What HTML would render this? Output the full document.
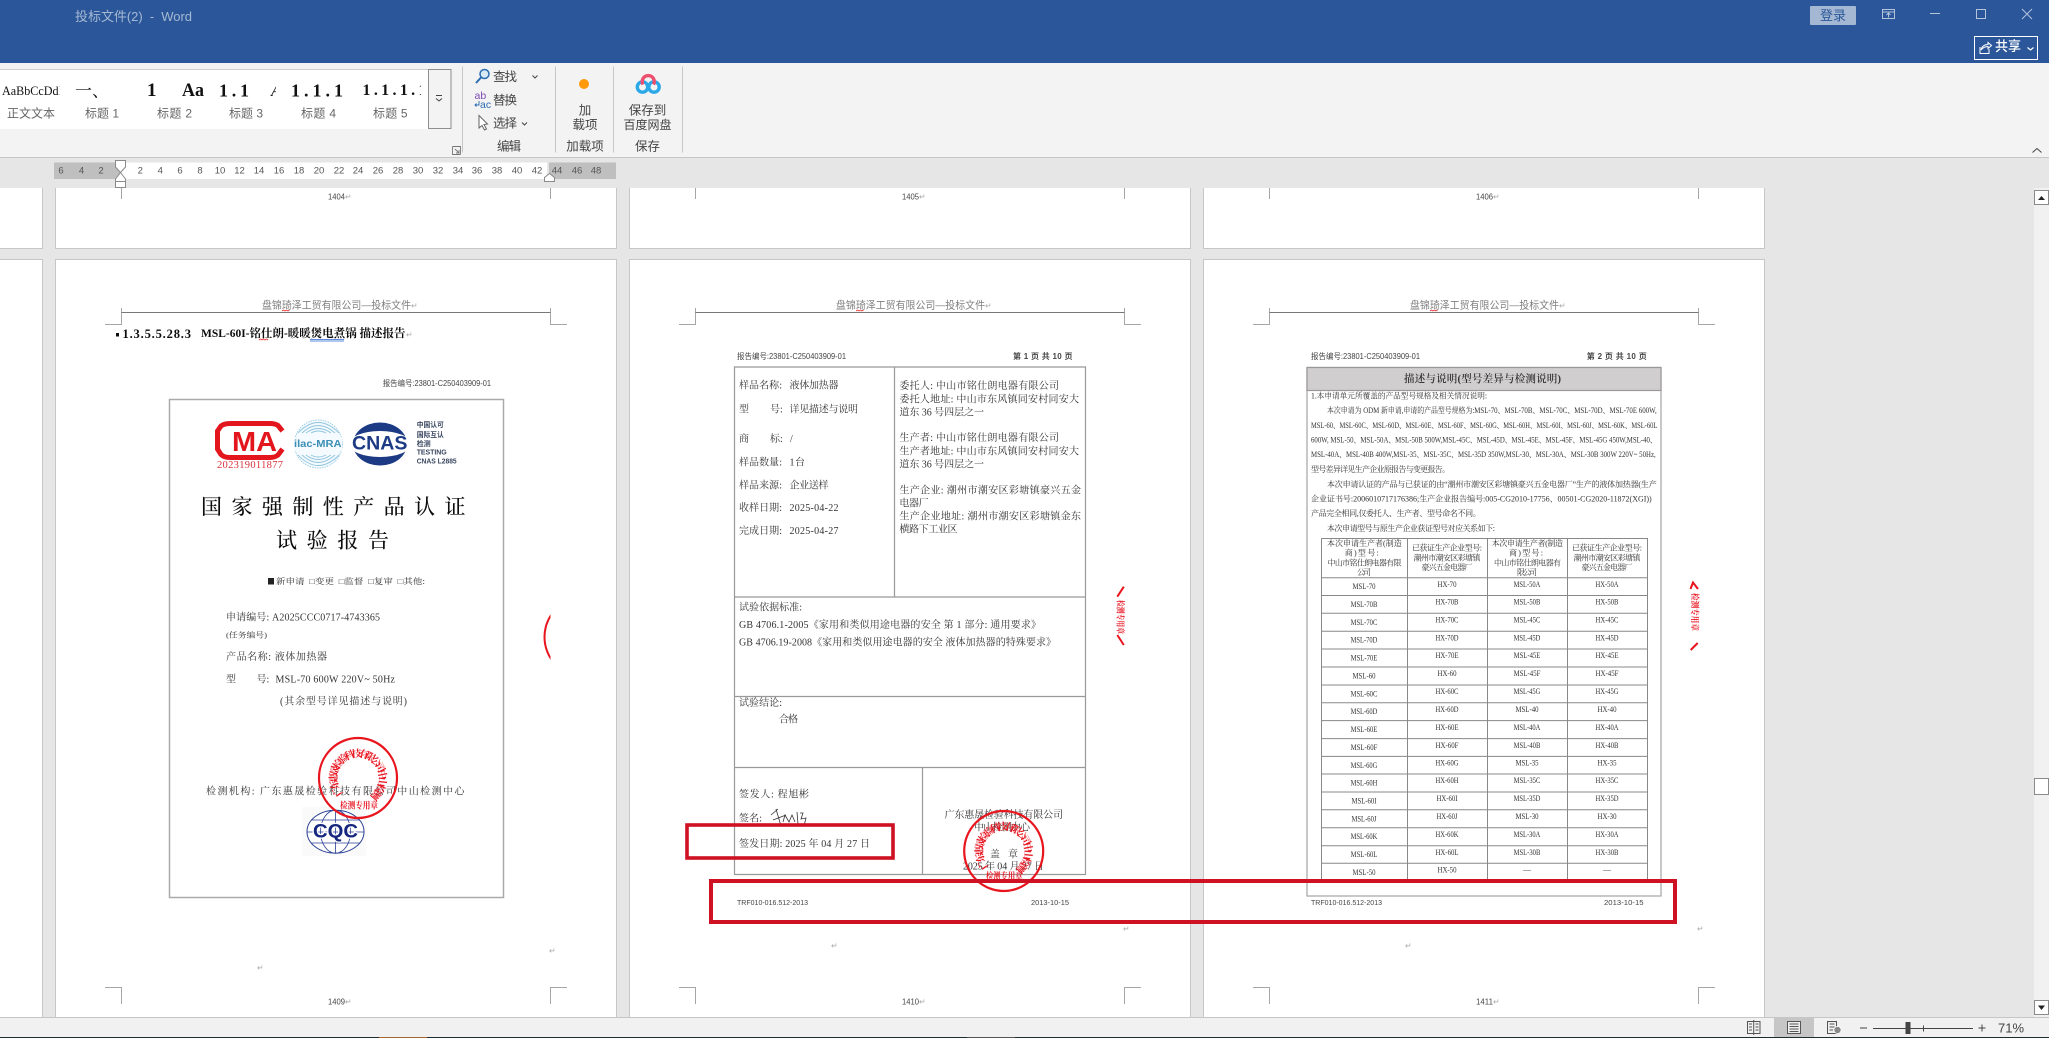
<!DOCTYPE html>
<html lang="zh"><head><meta charset="utf-8"><title>投标文件(2) - Word</title>
<style>
html,body{margin:0;padding:0;background:#e6e6e6;overflow:hidden}
svg{display:block;position:absolute;left:0;top:0}
text{dominant-baseline:central;white-space:pre}
.u{font-family:"Liberation Sans","Noto Sans CJK SC",sans-serif;font-size:12px;fill:#444}
.h{font-family:"Liberation Sans","Noto Sans CJK SC",sans-serif;font-size:10.5px;fill:#808080}
.s{font-family:"Liberation Serif","Noto Serif CJK SC",serif;font-size:10px;fill:#333}
.z{font-family:"Liberation Serif","Noto Serif CJK SC",serif;font-size:8px;fill:#333}
.n{font-family:"Liberation Sans","Noto Sans CJK SC",sans-serif;font-size:8px;fill:#444}
.p{font-family:"DejaVu Sans",sans-serif;font-size:8px;fill:#aaa}
.g{font-family:"Liberation Serif","Noto Serif CJK SC",serif;fill:#111}
.r{font-family:"Liberation Sans",sans-serif;font-size:9.5px;fill:#555;text-anchor:middle}
.m{text-anchor:middle}
.red{fill:#e8121f;font-family:"Liberation Serif","Noto Serif CJK SC",serif;font-weight:bold}
</style></head><body>
<svg width="2049" height="1038" viewBox="0 0 2049 1038" xmlns="http://www.w3.org/2000/svg">
<defs>
<filter id="b" filterUnits="userSpaceOnUse" x="0" y="188" width="2049" height="850"><feGaussianBlur stdDeviation="0.32"/></filter>
<clipPath id="c1"><rect x="530" y="600" width="20.5" height="80"/></clipPath>
<clipPath id="g1"><rect x="0" y="69" width="59.5" height="40"/></clipPath>
<clipPath id="g2"><rect x="262" y="69" width="14" height="40"/></clipPath>
<clipPath id="g3"><rect x="345" y="69" width="76" height="40"/></clipPath>
<path id="a1" d="M341 795A24 24 0 1 1 375 795"/>
<path id="a2" d="M986.7 868A24 24 0 1 1 1020.7 868"/>
</defs>

<!-- document background and pages -->
<rect width="2049" height="1038" fill="#e6e6e6"/>
<g fill="#fff" stroke="#c6c6c6">
<rect x="-5" y="180" width="47.5" height="68.5"/><rect x="55.5" y="180" width="561" height="68.5"/><rect x="629.5" y="180" width="561" height="68.5"/><rect x="1203.5" y="180" width="561" height="68.5"/>
<rect x="-5" y="259.5" width="47.5" height="790"/><rect x="55.5" y="259.5" width="561" height="790"/><rect x="629.5" y="259.5" width="561" height="790"/><rect x="1203.5" y="259.5" width="561" height="790"/>
</g>

<!-- guides upper row -->
<path d="M121.5 188V199M550.5 188V199M695.5 188V199M1124.5 188V199M1269.5 188V199M1698.5 188V199" stroke="#a6a6a6" fill="none"/>
<g filter="url(#b)">
<text class="n" x="328" y="197" textLength="17" lengthAdjust="spacingAndGlyphs">1404</text><text class="p" x="345" y="197">↵</text>
<text class="n" x="902" y="197" textLength="17" lengthAdjust="spacingAndGlyphs">1405</text><text class="p" x="919" y="197">↵</text>
<text class="n" x="1476" y="197" textLength="17" lengthAdjust="spacingAndGlyphs">1406</text><text class="p" x="1493" y="197">↵</text>

<!-- crops and header rules -->
<path d="M105 324.5H121.5V308M550.5 308V324.5H567M105 987.5H121.5V1004M567 987.5H550.5V1004M679 324.5H695.5V308M1124.5 308V324.5H1141M679 987.5H695.5V1004M1141 987.5H1124.5V1004M1253 324.5H1269.5V308M1698.5 308V324.5H1715M1253 987.5H1269.5V1004M1715 987.5H1698.5V1004" stroke="#a6a6a6" fill="none"/>
<path d="M121.5 312.5H550.5M695.5 312.5H1124.5M1269.5 312.5H1698.5" stroke="#777" fill="none"/>

<text class="h" x="262" y="305.5" textLength="149" lengthAdjust="spacingAndGlyphs">盘锦琦泽工贸有限公司—投标文件</text><text class="p" x="411" y="306">↵</text>
<text class="h" x="836" y="305.5" textLength="149" lengthAdjust="spacingAndGlyphs">盘锦琦泽工贸有限公司—投标文件</text><text class="p" x="985" y="306">↵</text>
<text class="h" x="1410" y="305.5" textLength="149" lengthAdjust="spacingAndGlyphs">盘锦琦泽工贸有限公司—投标文件</text><text class="p" x="1559" y="306">↵</text>
<path d="M282 311l1.5-1 1.5 1 1.5-1 1.5 1 1.5-1M856 311l1.5-1 1.5 1 1.5-1 1.5 1 1.5-1M1430 311l1.5-1 1.5 1 1.5-1 1.5 1 1.5-1" stroke="#e33" stroke-width=".8" fill="none"/>

<!-- PAGE 1 -->
<rect x="116" y="333" width="3" height="3.5" fill="#111"/>
<text class="g" x="122.5" y="334" font-size="12.5" font-weight="bold" textLength="68.5" lengthAdjust="spacing">1.3.5.5.28.3</text>
<text class="g" x="201" y="334" font-size="11.5" font-weight="bold" textLength="204.5" lengthAdjust="spacingAndGlyphs">MSL-60I-铭仕朗-暖暖煲电煮锅 描述报告</text><text class="p" x="406" y="335">↵</text>
<path d="M259 340l1.5-1 1.5 1 1.5-1 1.5 1 1.5-1 1.5 1" stroke="#e33" stroke-width=".8" fill="none"/>
<path d="M310 339.5H344M310 341H344" stroke="#2a66d0" stroke-width=".7"/>
<text class="n" x="382.7" y="383.7" textLength="108.3" lengthAdjust="spacingAndGlyphs">报告编号:23801-C250403909-01</text>

<rect x="169.5" y="399.5" width="334" height="498" fill="#fff" stroke="#aaa" stroke-width="1.5"/>
<!-- CMA -->
<path d="M282.5 431L278 425.5Q275 423.5 270 423.5H230Q224 423.5 221 426L217.5 431V449L221 454.5Q224 457.5 230 457.5H270Q275 457.5 278 455L282.5 449" fill="none" stroke="#e2161f" stroke-width="5"/>
<text x="232" y="441.5" font-family="Liberation Sans" font-weight="bold" font-size="28" fill="#e2161f" textLength="45" lengthAdjust="spacingAndGlyphs">MA</text>
<text x="217" y="465.5" font-family="Liberation Serif" font-size="10.5" fill="#d8323a" textLength="66" lengthAdjust="spacing">202319011877</text>
<!-- ilac -->
<circle cx="318.3" cy="444" r="24" fill="#f4fafd" stroke="#9fd0e3" stroke-dasharray="1.5 1"/>
<path d="M298 433Q318 412 339 433M302 433Q318 418 335 433M306 433Q318 424 331 433M311 433Q318 429 326 433M298 455Q318 476 339 455M302 455Q318 470 335 455M306 455Q318 464 331 455M311 455Q318 459 326 455" fill="none" stroke="#8fc4de" stroke-width=".9"/>
<rect x="294" y="437" width="48" height="14" fill="#f4fafd"/>
<text x="294" y="444" font-family="Liberation Sans" font-weight="bold" font-size="10.5" fill="#3b8fb5" textLength="47.5" lengthAdjust="spacingAndGlyphs">ilac-MRA</text>
<!-- CNAS -->
<ellipse cx="380" cy="444" rx="27" ry="21.5" fill="#1d3a84"/>
<ellipse cx="380" cy="444" rx="31" ry="13" fill="#fff"/>
<text x="352" y="444" font-family="Liberation Sans" font-weight="bold" font-size="19" fill="#1d3a84" textLength="55.5" lengthAdjust="spacingAndGlyphs">CNAS</text>
<text class="n" x="416.7" y="425.7" textLength="27" lengthAdjust="spacingAndGlyphs" style="font-size:7px;font-weight:bold;fill:#3a4660">中国认可</text>
<text class="n" x="416.7" y="435.5" textLength="27" lengthAdjust="spacingAndGlyphs" style="font-size:7px;font-weight:bold;fill:#3a4660">国际互认</text>
<text class="n" x="416.7" y="444.3" textLength="14" lengthAdjust="spacingAndGlyphs" style="font-size:7px;font-weight:bold;fill:#3a4660">检测</text>
<text class="n" x="416.7" y="453" textLength="30" lengthAdjust="spacing" style="font-size:7px;font-weight:bold;fill:#3a4660">TESTING</text>
<text class="n" x="416.7" y="462" textLength="40" lengthAdjust="spacingAndGlyphs" style="font-size:7px;font-weight:bold;fill:#3a4660">CNAS L2885</text>

<text class="g" x="201" y="507" font-size="21" font-weight="500" textLength="264.5" lengthAdjust="spacing">国家强制性产品认证</text>
<text class="g" x="276" y="540.5" font-size="21" font-weight="500" textLength="113" lengthAdjust="spacing">试验报告</text>
<rect x="268" y="578" width="6" height="6.5" fill="#222"/>
<text class="s" x="276" y="581.7" textLength="149" lengthAdjust="spacingAndGlyphs" style="font-size:8px">新申请  □变更  □监督  □复审  □其他:</text>
<text class="s" x="226" y="618" textLength="154" lengthAdjust="spacing">申请编号: A2025CCC0717-4743365</text>
<text class="s" x="226" y="635" textLength="41" lengthAdjust="spacingAndGlyphs" style="font-size:7.5px">(任务编号)</text>
<text class="s" x="226" y="657.5" textLength="101" lengthAdjust="spacing">产品名称: 液体加热器</text>
<text class="s" x="226" y="680">型</text><text class="s" x="256.5" y="680">号:</text>
<text class="s" x="275.5" y="680" textLength="119.5" lengthAdjust="spacing">MSL-70 600W 220V~ 50Hz</text>
<text class="s" x="280" y="702" textLength="127" lengthAdjust="spacing">(其余型号详见描述与说明)</text>
<text class="s" x="206" y="792" textLength="258.5" lengthAdjust="spacing">检测机构: 广东惠晟检验科技有限公司中山检测中心</text>
<!-- CQC -->
<rect x="302" y="807" width="64" height="49" fill="#fafafa"/>
<ellipse cx="335.5" cy="831.7" rx="28.5" ry="21.5" fill="#fff" stroke="#2a3f96" stroke-width="1"/>
<ellipse cx="335.5" cy="831.7" rx="15" ry="21.5" fill="none" stroke="#2a3f96" stroke-width=".8"/>
<path d="M335.5 810V853M311 820H360M311 843H360M307 832H364" stroke="#2a3f96" stroke-width=".8" fill="none"/>
<text x="313" y="832" font-family="Liberation Sans" font-weight="bold" font-size="19" fill="#12267e" textLength="45" lengthAdjust="spacingAndGlyphs" stroke="#fff" stroke-width="2.5" paint-order="stroke">CQC</text>
<text class="p" x="549" y="951">↵</text><text class="p" x="257" y="968">↵</text>
<text class="n" x="328" y="1002" textLength="17" lengthAdjust="spacingAndGlyphs">1409</text><text class="p" x="345" y="1002">↵</text>

<!-- PAGE 2 -->
<text class="n" x="737" y="356.7" textLength="109" lengthAdjust="spacingAndGlyphs">报告编号:23801-C250403909-01</text>
<text class="n" x="1013" y="356.7" textLength="59.5" lengthAdjust="spacing" style="font-weight:bold">第 1 页 共 10 页</text>
<path d="M734.5 367H1085.5V874.5H734.5ZM894.5 367V597M734.5 597H1085.5M734.5 696.5H1085.5M734.5 767.5H1085.5M922.5 767.5V874.5" fill="none" stroke="#999" stroke-width="1.2"/>
<g>
<text class="s" x="739" y="386" textLength="43" lengthAdjust="spacing">样品名称:</text><text class="s" x="789.5" y="386" textLength="49" lengthAdjust="spacing">液体加热器</text>
<text class="s" x="739" y="410">型</text><text class="s" x="770" y="410">号:</text><text class="s" x="789.5" y="410" textLength="68.5" lengthAdjust="spacing">详见描述与说明</text>
<text class="s" x="739" y="439.7">商</text><text class="s" x="770" y="439.7">标:</text><text class="s" x="790" y="439.7">/</text>
<text class="s" x="739" y="463" textLength="43" lengthAdjust="spacing">样品数量:</text><text class="s" x="789.5" y="463" textLength="15.5" lengthAdjust="spacing">1 台</text>
<text class="s" x="739" y="486" textLength="43" lengthAdjust="spacing">样品来源:</text><text class="s" x="789.5" y="486" textLength="39" lengthAdjust="spacing">企业送样</text>
<text class="s" x="739" y="508.7" textLength="43" lengthAdjust="spacing">收样日期:</text><text class="s" x="789.5" y="508.7" textLength="49" lengthAdjust="spacing">2025-04-22</text>
<text class="s" x="739" y="531.7" textLength="43" lengthAdjust="spacing">完成日期:</text><text class="s" x="789.5" y="531.7" textLength="49" lengthAdjust="spacing">2025-04-27</text>

<text class="s" x="899.4" y="386.7" textLength="159.6" lengthAdjust="spacing">委托人: 中山市铭仕朗电器有限公司</text>
<text class="s" x="899.4" y="400" textLength="179.6" lengthAdjust="spacing">委托人地址: 中山市东风镇同安村同安大</text>
<text class="s" x="899.4" y="413" textLength="84.6" lengthAdjust="spacing">道东 36 号四层之一</text>
<text class="s" x="899.4" y="438.7" textLength="159.6" lengthAdjust="spacing">生产者: 中山市铭仕朗电器有限公司</text>
<text class="s" x="899.4" y="452" textLength="179.6" lengthAdjust="spacing">生产者地址: 中山市东风镇同安村同安大</text>
<text class="s" x="899.4" y="465" textLength="84.6" lengthAdjust="spacing">道东 36 号四层之一</text>
<text class="s" x="899.4" y="491" textLength="181.6" lengthAdjust="spacing">生产企业: 潮州市潮安区彩塘镇豪兴五金</text>
<text class="s" x="899.4" y="504" textLength="29.2" lengthAdjust="spacing">电器厂</text>
<text class="s" x="899.4" y="517" textLength="181.6" lengthAdjust="spacing">生产企业地址: 潮州市潮安区彩塘镇金东</text>
<text class="s" x="899.4" y="530" textLength="58.1" lengthAdjust="spacing">横路下工业区</text>

<text class="s" x="739" y="608" textLength="63" lengthAdjust="spacing">试验依据标准:</text>
<text class="s" x="739" y="625.7" textLength="302" lengthAdjust="spacing">GB 4706.1-2005《家用和类似用途电器的安全 第 1 部分: 通用要求》</text>
<text class="s" x="739" y="643" textLength="317" lengthAdjust="spacing">GB 4706.19-2008《家用和类似用途电器的安全 液体加热器的特殊要求》</text>
<text class="s" x="739" y="703.7" textLength="43" lengthAdjust="spacing">试验结论:</text>
<text class="s" x="779" y="720" textLength="19" lengthAdjust="spacing">合格</text>
<text class="s" x="739" y="795" textLength="70" lengthAdjust="spacing">签发人: 程旭彬</text>
<text class="s" x="739" y="819" textLength="23" lengthAdjust="spacing">签名:</text>
<text class="s" x="739" y="844.7" textLength="131" lengthAdjust="spacing">签发日期: 2025 年 04 月 27 日</text>
<path d="M771 815L778 809M776 809L781 826M773 820L786 815M783 822L785 815L789 822L792 815L795 822M797 812L798 824M800 813L803 813L801 819L806 818L804 826" fill="none" stroke="#333" stroke-width=".8"/>
<text class="s" x="944.5" y="815.7" textLength="118.5" lengthAdjust="spacing">广东惠晟检验科技有限公司</text>
<text class="s" x="974" y="828" textLength="56" lengthAdjust="spacing">中山检测中心</text>
<text class="s" x="990" y="855" textLength="28" lengthAdjust="spacing">盖 章</text>
<text class="s" x="963" y="867" textLength="81" lengthAdjust="spacing">2025 年 04 月 27 日</text>
</g>
<text class="n" x="737" y="902.7" textLength="71" lengthAdjust="spacingAndGlyphs" style="font-size:7.5px">TRF010-016.512-2013</text>
<text class="n" x="1031" y="902.7" textLength="38" lengthAdjust="spacingAndGlyphs" style="font-size:7.5px">2013-10-15</text>
<text class="p" x="1123" y="929">↵</text><text class="p" x="831" y="946">↵</text>
<text class="n" x="902" y="1002" textLength="17" lengthAdjust="spacingAndGlyphs">1410</text><text class="p" x="919" y="1002">↵</text>

<!-- PAGE 3 -->
<text class="n" x="1311" y="356.7" textLength="109" lengthAdjust="spacingAndGlyphs">报告编号:23801-C250403909-01</text>
<text class="n" x="1586.7" y="356.7" textLength="60" lengthAdjust="spacing" style="font-weight:bold">第 2 页 共 10 页</text>
<rect x="1307" y="367.5" width="354" height="528.5" fill="#fff" stroke="#aaa" stroke-width="1.3"/>
<rect x="1307" y="367.5" width="354" height="23" fill="#d0cece" stroke="#999" stroke-width="1.2"/>
<text class="s" x="1404" y="379.3" textLength="157" lengthAdjust="spacing" style="font-size:10.5px;font-weight:600">描述与说明(型号差异与检测说明)</text>
<g>
<text class="z" x="1311" y="396" textLength="176" lengthAdjust="spacingAndGlyphs">1.本申请单元所覆盖的产品型号规格及相关情况说明:</text>
<text class="z" x="1327" y="410.7" textLength="329.7" lengthAdjust="spacingAndGlyphs">本次申请为 ODM 新申请,申请的产品型号规格为:MSL-70、MSL-70B、MSL-70C、MSL-70D、MSL-70E 600W,</text>
<text class="z" x="1311" y="425.3" textLength="346.3" lengthAdjust="spacingAndGlyphs">MSL-60、MSL-60C、MSL-60D、MSL-60E、MSL-60F、MSL-60G、MSL-60H、MSL-60I、MSL-60J、MSL-60K、MSL-60L</text>
<text class="z" x="1311" y="440" textLength="345.7" lengthAdjust="spacingAndGlyphs">600W, MSL-50、MSL-50A、MSL-50B 500W,MSL-45C、MSL-45D、MSL-45E、MSL-45F、MSL-45G 450W,MSL-40、</text>
<text class="z" x="1311" y="454.7" textLength="344.7" lengthAdjust="spacingAndGlyphs">MSL-40A、MSL-40B 400W,MSL-35、MSL-35C、MSL-35D 350W,MSL-30、MSL-30A、MSL-30B 300W 220V~ 50Hz,</text>
<text class="z" x="1311" y="469.7" textLength="139" lengthAdjust="spacing">型号差异详见生产企业原报告与变更报告。</text>
<text class="z" x="1327" y="484.3" textLength="329.7" lengthAdjust="spacing">本次申请认证的产品与已获证的由“潮州市潮安区彩塘镇豪兴五金电器厂”生产的液体加热器(生产</text>
<text class="z" x="1311" y="499" textLength="340.7" lengthAdjust="spacingAndGlyphs">企业证书号:2006010717176386;生产企业报告编号:005-CG2010-17756、00501-CG2020-11872(XGI))</text>
<text class="z" x="1311" y="513.7" textLength="169.7" lengthAdjust="spacing">产品完全相同,仅委托人、生产者、型号命名不同。</text>
<text class="z" x="1327" y="528.3" textLength="168" lengthAdjust="spacing">本次申请型号与原生产企业获证型号对应关系如下:</text>
</g>
<path d="M1321.5 538.5H1647.5V881M1321.5 538.5V881M1407.5 538.5V881M1487.5 538.5V881M1567.5 538.5V881M1321.5 577.7H1647.5M1321.5 595.5H1647.5M1321.5 613.3H1647.5M1321.5 631.2H1647.5M1321.5 649H1647.5M1321.5 667H1647.5M1321.5 685H1647.5M1321.5 702.7H1647.5M1321.5 720.6H1647.5M1321.5 738.6H1647.5M1321.5 756.4H1647.5M1321.5 774H1647.5M1321.5 792H1647.5M1321.5 809.8H1647.5M1321.5 827.7H1647.5M1321.5 845.7H1647.5M1321.5 863.3H1647.5" fill="none" stroke="#888" stroke-width="1"/>
<g>
<text class="z" x="1327" y="543.3" textLength="74.7" lengthAdjust="spacing">本次申请生产者(制造</text>
<text class="z m" x="1361.7" y="553" textLength="34" lengthAdjust="spacing">商)型号:</text>
<text class="z" x="1327.5" y="563" textLength="74" lengthAdjust="spacing">中山市铭仕朗电器有限</text>
<text class="z m" x="1364" y="572.7" textLength="14" lengthAdjust="spacing">公司</text>
<text class="z" x="1412" y="548" textLength="70" lengthAdjust="spacing">已获证生产企业型号:</text>
<text class="z" x="1413.5" y="558" textLength="67" lengthAdjust="spacing">潮州市潮安区彩塘镇</text>
<text class="z" x="1421.5" y="567.7" textLength="51" lengthAdjust="spacing">豪兴五金电器厂</text>
<text class="z" x="1491.7" y="543.3" textLength="71.3" lengthAdjust="spacing">本次申请生产者(制造</text>
<text class="z m" x="1526" y="553" textLength="34" lengthAdjust="spacing">商)型号:</text>
<text class="z" x="1494" y="563" textLength="67" lengthAdjust="spacing">中山市铭仕朗电器有</text>
<text class="z m" x="1527" y="572.7" textLength="20" lengthAdjust="spacing">限公司</text>
<text class="z" x="1572" y="548" textLength="70" lengthAdjust="spacing">已获证生产企业型号:</text>
<text class="z" x="1573.5" y="558" textLength="67" lengthAdjust="spacing">潮州市潮安区彩塘镇</text>
<text class="z" x="1581.5" y="567.7" textLength="51" lengthAdjust="spacing">豪兴五金电器厂</text>
</g>
<g>
<text class="z m" x="1364" y="586.7" textLength="23" lengthAdjust="spacingAndGlyphs">MSL-70</text><text class="z m" x="1447" y="584.3" textLength="19" lengthAdjust="spacingAndGlyphs">HX-70</text><text class="z m" x="1527" y="584.3" textLength="26.7" lengthAdjust="spacingAndGlyphs">MSL-50A</text><text class="z m" x="1607" y="584.3" textLength="23" lengthAdjust="spacingAndGlyphs">HX-50A</text>
<text class="z m" x="1364" y="604.5" textLength="26.7" lengthAdjust="spacingAndGlyphs">MSL-70B</text><text class="z m" x="1447" y="602.2" textLength="23" lengthAdjust="spacingAndGlyphs">HX-70B</text><text class="z m" x="1527" y="602.2" textLength="26.7" lengthAdjust="spacingAndGlyphs">MSL-50B</text><text class="z m" x="1607" y="602.2" textLength="23" lengthAdjust="spacingAndGlyphs">HX-50B</text>
<text class="z m" x="1364" y="622.3" textLength="26.7" lengthAdjust="spacingAndGlyphs">MSL-70C</text><text class="z m" x="1447" y="620" textLength="23" lengthAdjust="spacingAndGlyphs">HX-70C</text><text class="z m" x="1527" y="620" textLength="26.7" lengthAdjust="spacingAndGlyphs">MSL-45C</text><text class="z m" x="1607" y="620" textLength="23" lengthAdjust="spacingAndGlyphs">HX-45C</text>
<text class="z m" x="1364" y="640.2" textLength="26.7" lengthAdjust="spacingAndGlyphs">MSL-70D</text><text class="z m" x="1447" y="637.9" textLength="23" lengthAdjust="spacingAndGlyphs">HX-70D</text><text class="z m" x="1527" y="637.9" textLength="26.7" lengthAdjust="spacingAndGlyphs">MSL-45D</text><text class="z m" x="1607" y="637.9" textLength="23" lengthAdjust="spacingAndGlyphs">HX-45D</text>
<text class="z m" x="1364" y="658" textLength="26.7" lengthAdjust="spacingAndGlyphs">MSL-70E</text><text class="z m" x="1447" y="655.7" textLength="23" lengthAdjust="spacingAndGlyphs">HX-70E</text><text class="z m" x="1527" y="655.7" textLength="26.7" lengthAdjust="spacingAndGlyphs">MSL-45E</text><text class="z m" x="1607" y="655.7" textLength="23" lengthAdjust="spacingAndGlyphs">HX-45E</text>
<text class="z m" x="1364" y="676" textLength="23" lengthAdjust="spacingAndGlyphs">MSL-60</text><text class="z m" x="1447" y="673.7" textLength="19" lengthAdjust="spacingAndGlyphs">HX-60</text><text class="z m" x="1527" y="673.7" textLength="26.7" lengthAdjust="spacingAndGlyphs">MSL-45F</text><text class="z m" x="1607" y="673.7" textLength="23" lengthAdjust="spacingAndGlyphs">HX-45F</text>
<text class="z m" x="1364" y="694" textLength="26.7" lengthAdjust="spacingAndGlyphs">MSL-60C</text><text class="z m" x="1447" y="691.7" textLength="23" lengthAdjust="spacingAndGlyphs">HX-60C</text><text class="z m" x="1527" y="691.7" textLength="26.7" lengthAdjust="spacingAndGlyphs">MSL-45G</text><text class="z m" x="1607" y="691.7" textLength="23" lengthAdjust="spacingAndGlyphs">HX-45G</text>
<text class="z m" x="1364" y="711.7" textLength="26.7" lengthAdjust="spacingAndGlyphs">MSL-60D</text><text class="z m" x="1447" y="709.4" textLength="23" lengthAdjust="spacingAndGlyphs">HX-60D</text><text class="z m" x="1527" y="709.4" textLength="23" lengthAdjust="spacingAndGlyphs">MSL-40</text><text class="z m" x="1607" y="709.4" textLength="19" lengthAdjust="spacingAndGlyphs">HX-40</text>
<text class="z m" x="1364" y="729.6" textLength="26.7" lengthAdjust="spacingAndGlyphs">MSL-60E</text><text class="z m" x="1447" y="727.3" textLength="23" lengthAdjust="spacingAndGlyphs">HX-60E</text><text class="z m" x="1527" y="727.3" textLength="26.7" lengthAdjust="spacingAndGlyphs">MSL-40A</text><text class="z m" x="1607" y="727.3" textLength="23" lengthAdjust="spacingAndGlyphs">HX-40A</text>
<text class="z m" x="1364" y="747.6" textLength="26.7" lengthAdjust="spacingAndGlyphs">MSL-60F</text><text class="z m" x="1447" y="745.3" textLength="23" lengthAdjust="spacingAndGlyphs">HX-60F</text><text class="z m" x="1527" y="745.3" textLength="26.7" lengthAdjust="spacingAndGlyphs">MSL-40B</text><text class="z m" x="1607" y="745.3" textLength="23" lengthAdjust="spacingAndGlyphs">HX-40B</text>
<text class="z m" x="1364" y="765.4" textLength="26.7" lengthAdjust="spacingAndGlyphs">MSL-60G</text><text class="z m" x="1447" y="763.1" textLength="23" lengthAdjust="spacingAndGlyphs">HX-60G</text><text class="z m" x="1527" y="763.1" textLength="23" lengthAdjust="spacingAndGlyphs">MSL-35</text><text class="z m" x="1607" y="763.1" textLength="19" lengthAdjust="spacingAndGlyphs">HX-35</text>
<text class="z m" x="1364" y="783" textLength="26.7" lengthAdjust="spacingAndGlyphs">MSL-60H</text><text class="z m" x="1447" y="780.7" textLength="23" lengthAdjust="spacingAndGlyphs">HX-60H</text><text class="z m" x="1527" y="780.7" textLength="26.7" lengthAdjust="spacingAndGlyphs">MSL-35C</text><text class="z m" x="1607" y="780.7" textLength="23" lengthAdjust="spacingAndGlyphs">HX-35C</text>
<text class="z m" x="1364" y="801" textLength="25" lengthAdjust="spacingAndGlyphs">MSL-60I</text><text class="z m" x="1447" y="798.7" textLength="21" lengthAdjust="spacingAndGlyphs">HX-60I</text><text class="z m" x="1527" y="798.7" textLength="26.7" lengthAdjust="spacingAndGlyphs">MSL-35D</text><text class="z m" x="1607" y="798.7" textLength="23" lengthAdjust="spacingAndGlyphs">HX-35D</text>
<text class="z m" x="1364" y="818.8" textLength="25" lengthAdjust="spacingAndGlyphs">MSL-60J</text><text class="z m" x="1447" y="816.5" textLength="21" lengthAdjust="spacingAndGlyphs">HX-60J</text><text class="z m" x="1527" y="816.5" textLength="23" lengthAdjust="spacingAndGlyphs">MSL-30</text><text class="z m" x="1607" y="816.5" textLength="19" lengthAdjust="spacingAndGlyphs">HX-30</text>
<text class="z m" x="1364" y="836.7" textLength="26.7" lengthAdjust="spacingAndGlyphs">MSL-60K</text><text class="z m" x="1447" y="834.4" textLength="23" lengthAdjust="spacingAndGlyphs">HX-60K</text><text class="z m" x="1527" y="834.4" textLength="26.7" lengthAdjust="spacingAndGlyphs">MSL-30A</text><text class="z m" x="1607" y="834.4" textLength="23" lengthAdjust="spacingAndGlyphs">HX-30A</text>
<text class="z m" x="1364" y="854.7" textLength="26.7" lengthAdjust="spacingAndGlyphs">MSL-60L</text><text class="z m" x="1447" y="852.4" textLength="23" lengthAdjust="spacingAndGlyphs">HX-60L</text><text class="z m" x="1527" y="852.4" textLength="26.7" lengthAdjust="spacingAndGlyphs">MSL-30B</text><text class="z m" x="1607" y="852.4" textLength="23" lengthAdjust="spacingAndGlyphs">HX-30B</text>
<text class="z m" x="1364" y="872.3" textLength="23" lengthAdjust="spacingAndGlyphs">MSL-50</text><text class="z m" x="1447" y="870" textLength="19" lengthAdjust="spacingAndGlyphs">HX-50</text><text class="z m" x="1527" y="870">—</text><text class="z m" x="1607" y="870">—</text>
</g>
<text class="n" x="1311" y="902.7" textLength="71" lengthAdjust="spacingAndGlyphs" style="font-size:7.5px">TRF010-016.512-2013</text>
<text class="n" x="1604" y="902.7" textLength="39.6" lengthAdjust="spacingAndGlyphs" style="font-size:7.5px">2013-10-15</text>
<text class="p" x="1697" y="929">↵</text><text class="p" x="1405" y="946">↵</text>
<text class="n" x="1476" y="1002" textLength="17" lengthAdjust="spacingAndGlyphs">1411</text><text class="p" x="1493" y="1002">↵</text>
</g>

<!-- Red seals -->
<g filter="url(#b)">
<ellipse cx="358" cy="778" rx="39" ry="40" fill="none" stroke="#e8121f" stroke-width="2.2"/>
<text class="red" font-size="10" letter-spacing="-2.9"><textPath href="#a1">广东惠晟检验科技有限公司中山检测中心</textPath></text>
<text class="red" x="340" y="805.5" font-size="9" textLength="38" lengthAdjust="spacingAndGlyphs">检测专用章</text>
<ellipse cx="1003.7" cy="851" rx="39.5" ry="40" fill="none" stroke="#e8121f" stroke-width="2.2"/>
<text class="red" font-size="10" letter-spacing="-2.9"><textPath href="#a2">广东惠晟检验科技有限公司中山检测中心</textPath></text>
<text class="red" x="986" y="876" font-size="9" textLength="36.5" lengthAdjust="spacingAndGlyphs">检测专用章</text>
<g clip-path="url(#c1)"><ellipse cx="584.5" cy="637" rx="40" ry="40" fill="none" stroke="#e8121f" stroke-width="2"/></g>
<path d="M1117.3 596.7L1123.8 586.7M1117.3 635L1123.8 645M1690.5 589L1693 582.5L1698 589M1690.7 650L1697.7 643" stroke="#e8121f" stroke-width="2" fill="none"/>
<text class="red" transform="translate(1120.5,617) rotate(90)" text-anchor="middle" font-size="8.5" textLength="34" lengthAdjust="spacingAndGlyphs">检测专用章</text>
<text class="red" transform="translate(1695,612) rotate(90)" text-anchor="middle" font-size="8.5" textLength="38" lengthAdjust="spacingAndGlyphs">检测专用章</text>
</g>

<!-- Red annotation boxes -->
<rect x="687" y="825" width="206" height="33" fill="none" stroke="#cf1124" stroke-width="3.6"/>
<rect x="711" y="881" width="964" height="41" fill="none" stroke="#cf1124" stroke-width="4"/>

<!-- ruler -->
<rect x="0" y="158" width="2049" height="30" fill="#e6e6e6"/>
<rect x="54" y="162.5" width="67" height="16.5" fill="#bfbfbf"/><rect x="121" y="162.5" width="426" height="16.5" fill="#fff"/><rect x="549" y="162.5" width="67" height="16.5" fill="#bfbfbf"/>
<g>
<text class="r" x="61" y="171">6</text><text class="r" x="81.5" y="171">4</text><text class="r" x="101" y="171">2</text>
<text class="r" x="140.3" y="171">2</text><text class="r" x="160.3" y="171">4</text><text class="r" x="180" y="171">6</text><text class="r" x="200" y="171">8</text><text class="r" x="220" y="171">10</text><text class="r" x="239.5" y="171">12</text><text class="r" x="259" y="171">14</text><text class="r" x="279" y="171">16</text><text class="r" x="299" y="171">18</text><text class="r" x="319" y="171">20</text><text class="r" x="339" y="171">22</text><text class="r" x="358" y="171">24</text><text class="r" x="378" y="171">26</text><text class="r" x="398" y="171">28</text><text class="r" x="418" y="171">30</text><text class="r" x="438" y="171">32</text><text class="r" x="458" y="171">34</text><text class="r" x="477" y="171">36</text><text class="r" x="497" y="171">38</text><text class="r" x="517" y="171">40</text><text class="r" x="537" y="171">42</text><text class="r" x="557" y="171">44</text><text class="r" x="577" y="171">46</text><text class="r" x="596" y="171">48</text>
</g>
<path d="M115.5 160.5H125.5V167L120.5 172.5L115.5 167ZM120.5 172.5L125.5 179V181.5H115.5V179ZM115.5 181.5H125.5V187.5H115.5Z" fill="#fff" stroke="#8a8a8a"/>
<path d="M544.5 181.5V177.5L549.5 173.5L554.5 177.5V181.5Z" fill="#fff" stroke="#8a8a8a"/>

<!-- scrollbar -->
<rect x="2034" y="188" width="15" height="830" fill="#f1f1f1"/>
<rect x="2034.5" y="190.5" width="14" height="14" fill="#fff" stroke="#8a8a8a"/><path d="M2038 200L2041.5 196L2045 200Z" fill="#222"/>
<rect x="2034.5" y="1000.5" width="14" height="14" fill="#fff" stroke="#8a8a8a"/><path d="M2038 1005.5H2045L2041.5 1010Z" fill="#222"/>
<rect x="2034.5" y="778.5" width="14" height="16" fill="#fff" stroke="#8a8a8a"/>

<!-- title bar -->
<rect width="2049" height="63" fill="#2b579a"/>
<text class="u" x="75" y="16.5" style="font-size:13px;fill:#a6b9d4" textLength="117" lengthAdjust="spacing">投标文件(2)  -  Word</text>
<rect x="1810" y="6" width="46" height="19" rx="1" fill="#a4b8d3"/>
<text class="u m" x="1833" y="15.5" style="font-size:13px;fill:#2b579a">登录</text>
<path d="M1882.5 9.5H1894.5V18.5H1882.5ZM1882.5 12H1894.5M1888.5 17.5V13.5M1886.5 15L1888.5 13L1890.5 15" fill="none" stroke="#b4c4db"/>
<path d="M1930 13.5H1940" stroke="#b4c4db"/>
<rect x="1976.5" y="9.5" width="9" height="9" fill="none" stroke="#b4c4db"/>
<path d="M2022 9L2032 19M2032 9L2022 19" stroke="#b4c4db"/>
<rect x="1974.5" y="36.5" width="63" height="23" fill="none" stroke="#fff"/>
<path d="M1980 47V53.5H1989V49M1981 50C1982 46 1985 44.5 1988 44.5V42.5L1991.5 45.5L1988 48.5V46.5C1985 46.5 1983 47.5 1981 50Z" fill="none" stroke="#fff" stroke-width="1"/>
<text class="u" x="1995" y="46.5" style="font-size:13.5px;fill:#fff;font-weight:500" textLength="26" lengthAdjust="spacingAndGlyphs">共享</text>
<path d="M2027.5 47.5L2030.5 50L2033.5 47.5" fill="none" stroke="#fff" stroke-width="1.2"/>

<!-- ribbon -->
<rect y="63" width="2049" height="94" fill="#f3f3f3"/>
<rect y="157" width="2049" height="1" fill="#c6c6c6"/>
<rect x="0" y="69" width="428" height="60" fill="#fff"/>
<path d="M0 69.5H428" stroke="#cfcfcf"/>
<rect x="428.5" y="69.5" width="22.5" height="59" fill="#f3f3f3" stroke="#8e8e8e"/>
<path d="M436 95.5H442M436 98.5L439 101L442 98.5" fill="none" stroke="#444"/>
<g clip-path="url(#g1)"><text x="2" y="90.5" font-family="Liberation Serif" font-size="13" font-weight="500" fill="#111" textLength="64" lengthAdjust="spacingAndGlyphs">AaBbCcDdE</text></g>
<text x="75" y="91" font-family="Liberation Serif,Noto Serif CJK SC" font-size="17" fill="#111" textLength="34" lengthAdjust="spacing">一、</text>
<text x="147" y="90.5" font-family="Liberation Serif" font-size="19" font-weight="bold" fill="#111">1</text>
<text x="182" y="90.5" font-family="Liberation Serif" font-size="19" font-weight="bold" fill="#111" textLength="22" lengthAdjust="spacingAndGlyphs">Aa</text>
<text x="219" y="90.5" font-family="Liberation Serif" font-size="18" font-weight="bold" fill="#111" textLength="30" lengthAdjust="spacing">1.1</text>
<g clip-path="url(#g2)"><text x="271" y="90.5" font-family="Liberation Serif" font-size="17" font-style="italic" fill="#111">A</text></g>
<text x="291" y="90.5" font-family="Liberation Serif" font-size="18" font-weight="bold" fill="#111" textLength="52" lengthAdjust="spacing">1.1.1</text>
<g clip-path="url(#g3)"><text x="362.5" y="90.5" font-family="Liberation Serif" font-size="16" font-weight="bold" fill="#111" textLength="64" lengthAdjust="spacing">1.1.1.1</text></g>
<text class="u" x="7" y="113.7" style="fill:#666" textLength="48" lengthAdjust="spacing">正文文本</text>
<text class="u" x="85" y="113.7" style="fill:#666" textLength="34" lengthAdjust="spacing">标题 1</text>
<text class="u" x="157" y="113.7" style="fill:#666" textLength="35" lengthAdjust="spacing">标题 2</text>
<text class="u" x="229" y="113.7" style="fill:#666" textLength="34" lengthAdjust="spacing">标题 3</text>
<text class="u" x="301" y="113.7" style="fill:#666" textLength="35" lengthAdjust="spacing">标题 4</text>
<text class="u" x="373" y="113.7" style="fill:#666" textLength="34.6" lengthAdjust="spacing">标题 5</text>
<path d="M452.5 146.5H460.5V154.5M452.5 146.5V154.5H460.5M455 149L459 153M459 150V153H456" fill="none" stroke="#777" stroke-width=".9"/>
<path d="M462.5 66.5V152.5M555.5 66.5V152.5M613.5 66.5V152.5M682.5 66.5V152.5" stroke="#c6c6c6"/>

<circle cx="484.5" cy="74" r="4.5" fill="#d8e8f5" stroke="#2b6cb0" stroke-width="1.5"/>
<path d="M481 77.5L476 83" stroke="#2b6cb0" stroke-width="2"/>
<text class="u" x="493" y="77" style="font-size:12.5px" textLength="24" lengthAdjust="spacing">查找</text>
<path d="M532.5 75.5L535 78L537.5 75.5" fill="none" stroke="#444"/>
<text x="474.5" y="96" font-family="Liberation Sans" font-size="10.5" fill="#7d4bb0">ab</text>
<text x="480" y="105" font-family="Liberation Sans" font-size="10.5" fill="#2b6cb0">ac</text>
<path d="M479 101V105H475M476.5 103.5L475 105L476.5 106.5" fill="none" stroke="#2b6cb0" stroke-width=".9"/>
<text class="u" x="493" y="100.5" style="font-size:12.5px" textLength="24" lengthAdjust="spacing">替换</text>
<path d="M479 115.5V128L482 125.5L484.5 130L486.5 129L484 124.5L487.5 124Z" fill="#fff" stroke="#666"/>
<text class="u" x="493" y="123.5" style="font-size:12.5px" textLength="24" lengthAdjust="spacing">选择</text>
<path d="M522 122.5L524.5 125L527 122.5" fill="none" stroke="#444"/>
<text class="u m" x="509" y="146.5" style="font-size:12.5px" textLength="24" lengthAdjust="spacing">编辑</text>

<circle cx="584" cy="84" r="5" fill="#ff9a0a"/>
<text class="u m" x="585" y="110.5" style="font-size:12.5px">加</text>
<text class="u m" x="585" y="125" style="font-size:12.5px">载项</text>
<text class="u m" x="585" y="146.5" style="font-size:12.5px">加载项</text>

<circle cx="642.5" cy="87" r="5.2" fill="none" stroke="#2aa8e8" stroke-width="3.4"/>
<circle cx="654" cy="87" r="5.2" fill="none" stroke="#2aa8e8" stroke-width="3.4"/>
<path d="M643 84.5A6 6 0 1 1 653.5 84.5" fill="none" stroke="#ee4f6e" stroke-width="3.4"/>
<text class="u m" x="647.5" y="110.5" style="font-size:12.5px">保存到</text>
<text class="u m" x="647.5" y="125" style="font-size:12px" textLength="48" lengthAdjust="spacing">百度网盘</text>
<text class="u m" x="647.5" y="146.5" style="font-size:12.5px">保存</text>
<path d="M2032.5 152.5L2037 148.5L2041.5 152.5" fill="none" stroke="#444"/>

<!-- status bar -->
<rect y="1017" width="2049" height="21" fill="#f1f1f1"/>
<rect y="1017" width="2049" height="1" fill="#c6c6c6"/>
<rect x="1774" y="1018" width="40" height="19" fill="#c6c6c6"/>
<path d="M1747.5 1021.5H1760V1033.5H1747.5ZM1753.7 1020V1035M1749 1024H1752M1749 1027H1752M1749 1030H1752M1755.5 1024H1758.5M1755.5 1027H1758.5M1755.5 1030H1758.5" fill="none" stroke="#555"/>
<path d="M1787.5 1021.5H1800.5V1033.5H1787.5ZM1789.5 1024H1798.5M1789.5 1026.5H1798.5M1789.5 1029H1798.5M1789.5 1031.5H1798.5" fill="#eee" stroke="#555"/>
<path d="M1827.5 1021.5H1836.5V1033.5H1827.5ZM1829.5 1024H1834.5M1829.5 1027H1834.5M1829.5 1030H1833" fill="none" stroke="#555"/>
<circle cx="1837.5" cy="1030" r="3.6" fill="#8a8a8a" stroke="#fff" stroke-width=".7"/>
<path d="M1860 1028H1867M1873 1028.5H1973M1923.5 1025.5V1031.5M1978.5 1028H1985.5M1982 1024.5V1031.5" stroke="#444"/>
<rect x="1905.5" y="1022" width="5" height="12" fill="#444"/>
<text class="u m" x="2011" y="1028" style="font-size:13px">71%</text>

<!-- taskbar sliver -->
<rect y="1037" width="2049" height="1" fill="#1f2b33"/>
<rect x="379" y="1037" width="48" height="1" fill="#a8662e"/>
<rect x="967" y="1037" width="48" height="1" fill="#555"/>
</svg>
</body></html>
